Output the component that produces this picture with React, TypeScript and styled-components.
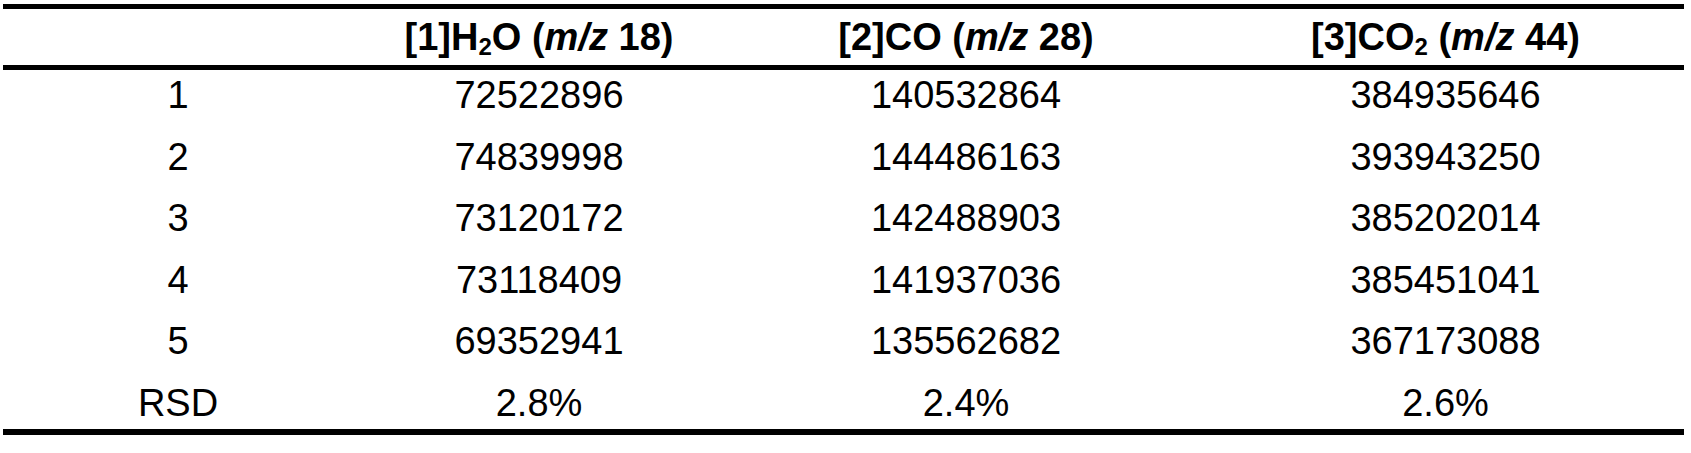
import React from "react";
import styled, { createGlobalStyle } from "styled-components";

const Global = createGlobalStyle`
  html, body { margin: 0; padding: 0; background: #fff; }
  body { font-family: "Liberation Sans", Arial, sans-serif; color: #000; }
`;

const Table = styled.div`
  margin: 4px 0 0 3px;
  width: 1681px;
  border-top: 5px solid #000;
  border-bottom: 6px solid #000;
`;

const cols = "350px 372px 482px 477px";

const HeaderRow = styled.div`
  display: grid;
  grid-template-columns: ${cols};
  height: 56px;
  align-items: center;
  border-bottom: 5px solid #000;
  font-weight: bold;
  font-size: 38px;
  line-height: 56px;
`;

const Body = styled.div`
  margin: -5px 0;
`;

const Row = styled.div`
  display: grid;
  grid-template-columns: ${cols};
  height: 61.5px;
  align-items: center;
  font-size: 38px;
  line-height: 61.5px;
`;

const Cell = styled.div`
  text-align: center;
  white-space: nowrap;
`;

const Sub = styled.sub`
  font-size: 24px;
  line-height: 0;
  vertical-align: -5px;
`;

const rows: [string, string, string, string][] = [
  ["1", "72522896", "140532864", "384935646"],
  ["2", "74839998", "144486163", "393943250"],
  ["3", "73120172", "142488903", "385202014"],
  ["4", "73118409", "141937036", "385451041"],
  ["5", "69352941", "135562682", "367173088"],
  ["RSD", "2.8%", "2.4%", "2.6%"],
];

export default function App() {
  return (
    <>
      <Global />
      <Table>
        <HeaderRow>
          <Cell />
          <Cell>
            [1]H<Sub>2</Sub>O (<i>m/z</i> 18)
          </Cell>
          <Cell>
            [2]CO (<i>m/z</i> 28)
          </Cell>
          <Cell>
            [3]CO<Sub>2</Sub> (<i>m/z</i> 44)
          </Cell>
        </HeaderRow>
        <Body>
          {rows.map((r) => (
            <Row key={r[0]}>
              {r.map((c, i) => (
                <Cell key={i}>{c}</Cell>
              ))}
            </Row>
          ))}
        </Body>
      </Table>
    </>
  );
}
